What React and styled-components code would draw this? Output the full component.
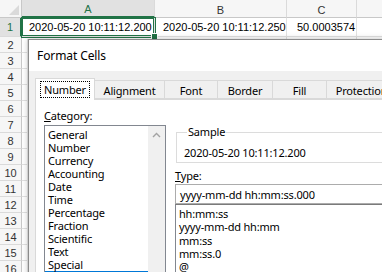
import React from "react";
import styled, { createGlobalStyle } from "styled-components";

const Global = createGlobalStyle`
  html, body {
    margin: 0;
    padding: 0;
    width: 382px;
    height: 272px;
    overflow: hidden;
    background: #fff;
  }
`;

const Screen = styled.div`
  position: relative;
  width: 382px;
  height: 272px;
  overflow: hidden;
`;

const Sheet = styled.div`
  display: grid;
  grid-template-columns: 22px 133px 132px 70px 60px;
  grid-template-rows: 18px 19px repeat(15, 16px);
  font-family: "Liberation Sans", Arial, sans-serif;
  font-size: 11px;
  color: #000;
`;

const Corner = styled.div`
  position: relative;
  background: #f6f6f6;
  border-right: 1px solid #c8c8c8;
  border-bottom: 1px solid #c8c8c8;
  &::after {
    content: "";
    position: absolute;
    right: 2px;
    bottom: 2px;
    border-style: solid;
    border-width: 0 0 10px 10px;
    border-color: transparent transparent #dadada transparent;
  }
`;

const ColHead = styled.div`
  display: flex;
  align-items: flex-end;
  justify-content: center;
  padding-bottom: 1px;
  box-sizing: border-box;
  background: ${(p) => (p.$active ? "#e1e1e1" : "#f6f6f6")};
  color: ${(p) => (p.$active ? "#217346" : "#333")};
  border-right: 1px solid #dadada;
  border-bottom: ${(p) => (p.$active ? "2px solid #217346" : "1px solid #c8c8c8")};
  font-size: 11px;
`;

const RowHead = styled.div`
  display: flex;
  align-items: center;
  justify-content: center;
  background: ${(p) => (p.$active ? "#e1e1e1" : "#f6f6f6")};
  color: ${(p) => (p.$active ? "#217346" : "#333")};
  border-right: ${(p) => (p.$active ? "2px solid #217346" : "1px solid #c8c8c8")};
  border-bottom: 1px solid #dadada;
  font-size: 11px;
`;

const Cell = styled.div`
  position: relative;
  display: flex;
  align-items: center;
  padding-left: ${(p) => p.$pad || 8}px;
  white-space: nowrap;
  border-right: 1px solid #e1e1e1;
  border-bottom: 1px solid #e1e1e1;
  ${(p) =>
    p.$selected &&
    `
    z-index: 1;
    box-shadow: 0 0 0 1px #217346, inset 0 0 0 1px #217346;
    &::after {
      content: "";
      position: absolute;
      right: -4px;
      bottom: -4px;
      width: 5px;
      height: 5px;
      background: #217346;
      border: 1px solid #fff;
    }
  `}
`;

const Dialog = styled.div`
  position: absolute;
  left: 28px;
  top: 39px;
  width: 390px;
  height: 260px;
  display: flex;
  flex-direction: column;
  border: 1px solid #8c8c8c;
  background: #f0f0f0;
  box-shadow: -1px 0 0 #d0d0d0, 0 0 6px rgba(0, 0, 0, 0.25);
  font-family: "Noto Sans", "Open Sans", sans-serif;
  font-size: 11px;
  letter-spacing: -0.18px;
  color: #000;
  z-index: 2;
`;

const TitleBar = styled.div`
  height: 31px;
  flex: none;
  display: flex;
  align-items: center;
  padding-left: 8px;
  background: #fff;
  font-size: 12px;
  letter-spacing: -0.1px;
`;

const Body = styled.div`
  flex: 1;
  display: flex;
  flex-direction: column;
  padding: 7px 0 0 6px;
`;

const TabStrip = styled.div`
  display: flex;
  align-items: flex-end;
  height: 21px;
  position: relative;
  z-index: 1;
`;

const Tab = styled.div`
  width: ${(p) => p.$w}px;
  height: ${(p) => (p.$active ? 22 : 19)}px;
  box-sizing: border-box;
  display: flex;
  align-items: center;
  justify-content: center;
  background: ${(p) => (p.$active ? "#fff" : "#f0f0f0")};
  border: 1px solid #d9d9d9;
  border-left-width: ${(p) => (p.$first || p.$active ? 1 : 0)}px;
  border-bottom: ${(p) => (p.$active ? "none" : "1px solid #d9d9d9")};
  margin-bottom: ${(p) => (p.$active ? -1 : 0)}px;
  white-space: nowrap;
  overflow: hidden;
  padding-top: ${(p) => (p.$active ? 0 : 1)}px;
`;

const Focus = styled.span`
  outline: 1px dotted #000;
  padding: 0 3px;
  line-height: 15px;
`;

const Panel = styled.div`
  flex: 1;
  display: flex;
  background: #fff;
  border: 1px solid #d9d9d9;
  padding: 8px 0 0 8px;
  gap: 9px;
`;

const Column = styled.div`
  display: flex;
  flex-direction: column;
  width: ${(p) => (p.$w ? `${p.$w}px` : "auto")};
  flex: ${(p) => (p.$w ? "none" : 1)};
`;

const Label = styled.div`
  line-height: 16px;
  height: 16px;
  margin-top: ${(p) => p.$mt || 0}px;
  margin-bottom: ${(p) => p.$mb || 0}px;
`;

const ListBox = styled.div`
  display: flex;
  border: 1px solid #828790;
  height: 200px;
`;

const Items = styled.div`
  flex: 1;
  padding-top: 2px;
`;

const Item = styled.div`
  height: 13px;
  line-height: 13px;
  padding-left: 3px;
  white-space: nowrap;
  background: ${(p) => (p.$selected ? "#0078d7" : "transparent")};
  color: ${(p) => (p.$selected ? "#fff" : "#000")};
`;

const ScrollBar = styled.div`
  width: 17px;
  background: #f0f0f0;
  display: flex;
  justify-content: center;
  padding-top: 6px;
`;

const Group = styled.fieldset`
  margin: 17px 0 0 1px;
  padding: 6px 0 0 7px;
  height: 38px;
  box-sizing: border-box;
  border: 1px solid #dcdcdc;
  border-right: none;
  min-width: 0;
`;

const Legend = styled.legend`
  padding: 0 1px;
  margin-left: 3px;
  line-height: 14px;
`;

const Value = styled.div`
  line-height: 16px;
  white-space: nowrap;
`;

const Input = styled.div`
  height: 20px;
  box-sizing: border-box;
  border: 1px solid #acacac;
  border-right: none;
  display: flex;
  align-items: center;
  padding-left: 4px;
  white-space: nowrap;
`;

const TypeList = styled.div`
  border: 1px solid #828790;
  border-right: none;
  border-top-color: #7a7a7a;
  padding-top: 2px;
  height: 120px;
`;

const TypeItem = styled.div`
  height: 13.3px;
  line-height: 13.3px;
  padding-left: 3px;
  white-space: nowrap;
`;

const rows = Array.from({ length: 15 }, (_, i) => i + 2);
const categories = [
  "General",
  "Number",
  "Currency",
  "Accounting",
  "Date",
  "Time",
  "Percentage",
  "Fraction",
  "Scientific",
  "Text",
  "Special",
];
const types = ["hh:mm:ss", "yyyy-mm-dd hh:mm", "mm:ss", "mm:ss.0", "@"];
const tabs = [
  ["Number", 60],
  ["Alignment", 70],
  ["Font", 53],
  ["Border", 55],
  ["Fill", 54],
  ["Protection", 70],
];

export default function App() {
  return (
    <Screen>
      <Global />
      <Sheet>
        <Corner />
        <ColHead $active>A</ColHead>
        <ColHead>B</ColHead>
        <ColHead>C</ColHead>
        <ColHead />
        <RowHead $active>1</RowHead>
        <Cell $selected $pad={7}>2020-05-20 10:11:12.200</Cell>
        <Cell $pad={8}>2020-05-20 10:11:12.250</Cell>
        <Cell $pad={10}>50.0003574</Cell>
        <Cell />
        {rows.map((r) => (
          <React.Fragment key={r}>
            <RowHead>{r}</RowHead>
            <Cell />
            <Cell />
            <Cell />
            <Cell />
          </React.Fragment>
        ))}
      </Sheet>
      <Dialog>
        <TitleBar>Format Cells</TitleBar>
        <Body>
          <TabStrip>
            {tabs.map(([t, w], i) => (
              <Tab key={t} $w={w} $active={i === 0} $first={i === 0}>
                {i === 0 ? <Focus>{t}</Focus> : t}
              </Tab>
            ))}
          </TabStrip>
          <Panel>
            <Column $w={122}>
              <Label $mb={1}>
                <u>C</u>ategory:
              </Label>
              <ListBox>
                <Items>
                  {categories.map((c) => (
                    <Item key={c}>{c}</Item>
                  ))}
                  <Item $selected>Custom</Item>
                </Items>
                <ScrollBar>
                  <svg width="9" height="6" viewBox="0 0 9 6">
                    <path d="M1 5 L4.5 1.5 L8 5" fill="none" stroke="#a3a3a3" strokeWidth="1.4" />
                  </svg>
                </ScrollBar>
              </ListBox>
            </Column>
            <Column>
              <Group>
                <Legend>Sample</Legend>
                <Value>2020-05-20 10:11:12.200</Value>
              </Group>
              <Label $mt={5}>
                <u>T</u>ype:
              </Label>
              <Input>yyyy-mm-dd hh:mm:ss.000</Input>
              <TypeList>
                {types.map((t) => (
                  <TypeItem key={t}>{t}</TypeItem>
                ))}
              </TypeList>
            </Column>
          </Panel>
        </Body>
      </Dialog>
    </Screen>
  );
}
